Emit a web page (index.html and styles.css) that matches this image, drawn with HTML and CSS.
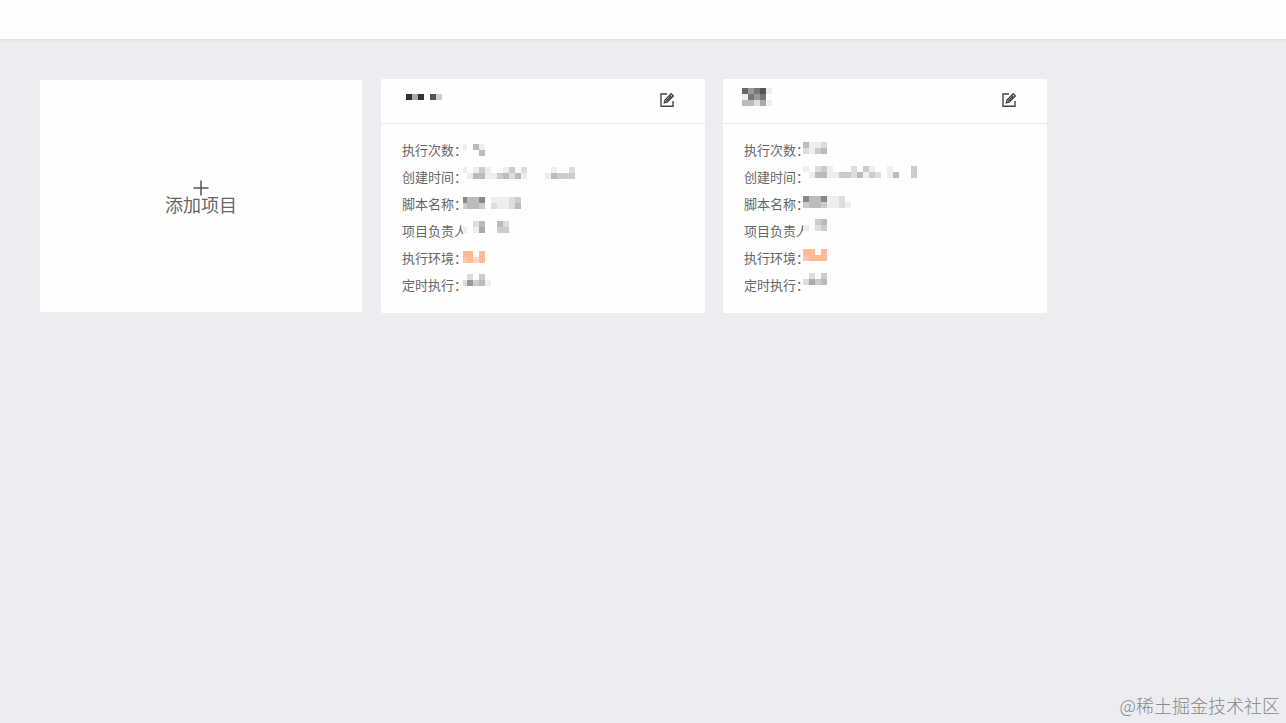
FILE: index.html
```html
<!DOCTYPE html>
<html lang="zh-CN">
<head>
<meta charset="utf-8">
<meta name="viewport" content="width=device-width, initial-scale=1">
<title>项目</title>
<link rel="stylesheet" href="styles.css">
</head>
<body>
<header class="topbar"></header>
<main class="projects">
  <button class="card add-card" type="button">
    <svg class="plus" viewBox="0 0 16 16" aria-hidden="true"><path d="M8 0.5V15.5M0.5 8H15.5"/></svg>
    <span>添加项目</span>
  </button>

  <article class="card">
    <div class="card-head">
      <svg class="title-mosaic wide" data-rows="0,15,3a3.5c"></svg>
      <button class="edit" type="button" aria-label="编辑">
        <svg viewBox="0 0 16 16" aria-hidden="true"><path d="M8 2H2V14.2H14V9"/><path d="M5.4 10.8L6 8L12.2 1.8L14.3 3.9L8.1 10.1Z"/><path d="M10.6 3.4L12.7 5.5M7 9.2L11.5 4.7"/></svg>
      </button>
    </div>
    <div class="card-body">
      <ul class="fields">
        <li>执行次数：</li><li>创建时间：</li><li>脚本名称：</li><li>项目负责人</li><li>执行环境：</li><li>定时执行：</li>
      </ul>
      <svg class="values" data-rows="-2,20,e.be -2,26,...b -2,43,e.ece..ec.d....e..d -2,49,.ebbeecbdbe...ebccc -2,73,8bb8.eeedc -2,79,cbbc.deedb -2,97,..db..bd -2,103,e.ea..cc -2,127,OO.O -2,133,PORO -2,150,.d.c -2,156,d9cbe"></svg>
    </div>
  </article>

  <article class="card">
    <div class="card-head">
      <svg class="title-mosaic" data-rows="0,9,6975e 0,15,e797. 0,21,bbdae"></svg>
      <button class="edit" type="button" aria-label="编辑">
        <svg viewBox="0 0 16 16" aria-hidden="true"><path d="M8 2H2V14.2H14V9"/><path d="M5.4 10.8L6 8L12.2 1.8L14.3 3.9L8.1 10.1Z"/><path d="M10.6 3.4L12.7 5.5M7 9.2L11.5 4.7"/></svg>
      </button>
    </div>
    <div class="card-body">
      <ul class="fields">
        <li>执行次数：</li><li>创建时间：</li><li>脚本名称：</li><li>项目负责人</li><li>执行环境：</li><li>定时执行：</li>
      </ul>
      <svg class="values near" data-rows="0,18,beed 0,24,decb 0,42,e.dce...d.ce..e...c 0,48,.ebbeeccdbecd.eb..c 0,72,8bb8eed 0,78,cbbceede 0,95,..cb 0,101,e.dc 0,125,OO.O 0,131,POOO 0,149,.d.c 0,155,dacb"></svg>
    </div>
  </article>
</main>
<footer class="watermark">@稀土掘金技术社区</footer>
<script src="mosaic.js"></script>
</body>
</html>
```
FILE: mosaic.js
```js
// Each row is "x,y,cells"; a cell is a hex grey level, or one of the orange tints.
const tints = { O: "#ffb995", P: "#ffc7aa", R: "#ffd5c0" };
for (const svg of document.querySelectorAll("svg[data-rows]")) {
  for (const row of svg.dataset.rows.split(" ")) {
    const [x, y, cells] = row.split(",");
    [...cells].forEach((c, i) => {
      if (c === ".") return;
      const rect = document.createElementNS("http://www.w3.org/2000/svg", "rect");
      rect.setAttribute("x", Number(x) + i * 6);
      rect.setAttribute("y", y);
      rect.setAttribute("width", 6);
      rect.setAttribute("height", 6);
      rect.setAttribute("fill", tints[c] || "#" + c + c + c);
      svg.appendChild(rect);
    });
  }
}
```
FILE: styles.css
```css
* { box-sizing: border-box; }
body {
  margin: 0;
  min-height: 100vh;
  display: flex;
  flex-direction: column;
  background: #ebedf1;
  color: #666;
  font-family: "Noto Sans CJK SC", sans-serif;
}
.topbar {
  height: 40px;
  background: #fefefe;
  border-bottom: 1px solid #dfe2e6;
  box-shadow: 0 1px 2px #e2e5e9;
}
.projects {
  flex: 1;
  display: flex;
  flex-wrap: wrap;
  align-content: flex-start;
  align-items: center;
  gap: 18px;
  padding: 39px 40px;
}
.card {
  width: 324px;
  background: #fefefe;
  border-radius: 2px;
}
.add-card {
  width: 322px;
  height: 232px;
  margin-right: 1px;
  border: 0;
  border-radius: 0;
  padding: 0;
  display: flex;
  flex-direction: column;
  align-items: center;
  justify-content: center;
  color: #666;
  font: 18px/16px "Noto Sans CJK SC", sans-serif;
  cursor: pointer;
}
.plus {
  width: 16px;
  height: 16px;
  stroke: #555;
  stroke-width: 1.5;
}
.card-head {
  height: 45px;
  padding: 0 30px 2px 19px;
  display: flex;
  align-items: center;
  justify-content: space-between;
  border-bottom: 1px solid #e9eaec;
}
.title-mosaic {
  width: 36px;
  height: 42px;
}
.title-mosaic.wide { margin-left: 6px; }
.edit {
  border: 0;
  padding: 0;
  background: none;
  display: flex;
  cursor: pointer;
}
.edit svg {
  width: 16px;
  height: 16px;
  fill: none;
  stroke: #444;
  stroke-width: 1.4;
}
.card-body {
  position: relative;
  padding: 12px 21px 15px;
}
.fields {
  margin: 0;
  padding: 0;
  list-style: none;
  font-size: 13px;
  line-height: 27px;
}
.values {
  position: absolute;
  top: 0;
  left: 82px;
  width: 120px;
  height: 180px;
  background: #fefefe;
}
.values.near { left: 80px; }
.watermark {
  padding: 0 6px 5px;
  text-align: right;
  color: #888;
  font-size: 18px;
  font-weight: 300;
  line-height: 26px;
}
```
